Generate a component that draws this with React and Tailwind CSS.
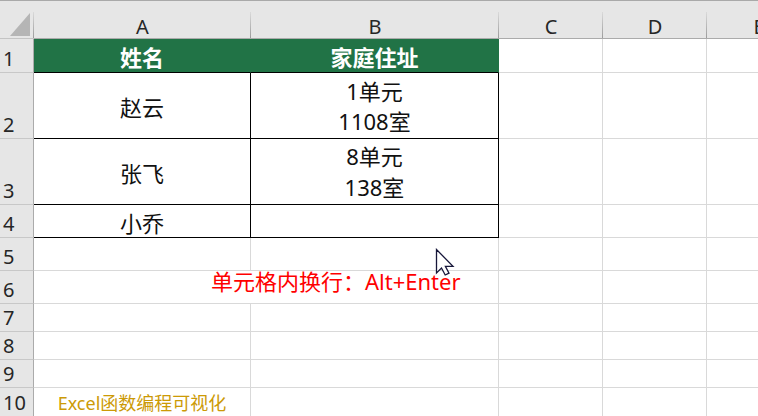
import React from "react";

const F = "font-['Noto_Sans','Noto_Sans_CJK_SC',sans-serif]";

function ColHead({ label }) {
  return (
    <div className="relative flex items-end justify-center pb-[1px] bg-[#e6e6e6] border-t border-b border-t-[#a9a9a9] border-b-[#ababab] text-[20px] leading-[20px] text-[#262626] overflow-visible">
      <span>{label}</span>
      <span className="absolute right-0 top-[11px] bottom-0 w-px bg-linear-to-b from-[#dadada] to-[#9c9c9c]" />
    </div>
  );
}

function RowHead({ n }) {
  return (
    <div className="flex items-end pl-[3px] pb-[3px] bg-[#e6e6e6] border-r border-b border-r-[#ababab] border-b-[#c8c8c8] text-[20px] leading-[20px] text-[#262626]">
      {n}
    </div>
  );
}

function Grid() {
  return <div className="border-r border-b border-[#d9d9d9] bg-white" />;
}

function Tbl({ children, className = "" }) {
  return (
    <div className={"flex flex-col items-center justify-center border-r border-b border-black bg-white text-[22px] text-[#111] " + className}>
      {children}
    </div>
  );
}

export default function App() {
  return (
    <div className={"relative w-[758px] h-[416px] overflow-hidden bg-white " + F}>
      <div className="grid grid-cols-[34px_217px_248px_104px_104px_104px] grid-rows-[39px_34px_66px_66px_33px_33px_33px_28px_28px_28px_29px]">
        {/* header row */}
        <div className="relative bg-[#e6e6e6] border-t border-b border-t-[#a9a9a9] border-b-[#c4c4c4]">
          <svg className="absolute left-[10px] top-[12px]" width="21" height="23" viewBox="0 0 21 23">
            <polygon points="20,0 20,23 0,23" fill="#b5b5b5" />
          </svg>
          <span className="absolute right-0 top-[11px] bottom-0 w-px bg-linear-to-b from-[#dadada] to-[#9c9c9c]" />
        </div>
        <ColHead label="A" />
        <ColHead label="B" />
        <ColHead label="C" />
        <ColHead label="D" />
        <ColHead label="E" />

        {/* row 1 */}
        <RowHead n={1} />
        <div className="flex items-center justify-center pt-[3px] bg-[#217346] border-r border-b border-r-[#217346] border-b-black text-white font-bold text-[22px] leading-[22px]">
          姓名
        </div>
        <div className="flex items-center justify-center pt-[3px] bg-[#217346] border-r border-b border-r-[#217346] border-b-black text-white font-bold text-[22px] leading-[22px]">
          家庭住址
        </div>
        <Grid />
        <Grid />
        <Grid />

        {/* row 2 */}
        <RowHead n={2} />
        <Tbl className="leading-[22px] pt-[2px]">赵云</Tbl>
        <Tbl className="leading-[30px]">
          <span>1单元</span>
          <span>1108室</span>
        </Tbl>
        <Grid />
        <Grid />
        <Grid />

        {/* row 3 */}
        <RowHead n={3} />
        <Tbl className="leading-[22px] pt-[2px]">张飞</Tbl>
        <Tbl className="leading-[31px] pt-[1px]">
          <span>8单元</span>
          <span>138室</span>
        </Tbl>
        <Grid />
        <Grid />
        <Grid />

        {/* row 4 */}
        <RowHead n={4} />
        <Tbl className="leading-[22px] pt-[3px]">小乔</Tbl>
        <Tbl />
        <Grid />
        <Grid />
        <Grid />

        {/* row 5 */}
        <RowHead n={5} />
        <Grid />
        <Grid />
        <Grid />
        <Grid />
        <Grid />

        {/* row 6 */}
        <RowHead n={6} />
        <div className="col-span-2 flex items-start pl-[177px] border-r border-b border-[#d9d9d9] bg-white text-[22px] leading-[20px] text-[#ff0000] whitespace-nowrap">
          单元格内换行：Alt+Enter
        </div>
        <Grid />
        <Grid />
        <Grid />

        {/* rows 7-9 */}
        <RowHead n={7} />
        <Grid />
        <Grid />
        <Grid />
        <Grid />
        <Grid />
        <RowHead n={8} />
        <Grid />
        <Grid />
        <Grid />
        <Grid />
        <Grid />
        <RowHead n={9} />
        <Grid />
        <Grid />
        <Grid />
        <Grid />
        <Grid />

        {/* row 10 */}
        <RowHead n={10} />
        <div className="flex items-center justify-center pt-[1px] border-r border-b border-[#d9d9d9] bg-white text-[18px] leading-[18px] text-[#cc9a06] whitespace-nowrap">
          Excel函数编程可视化
        </div>
        <Grid />
        <Grid />
        <Grid />
        <Grid />
      </div>

      {/* mouse cursor */}
      <svg className="absolute left-[435px] top-[248px]" width="20" height="28" viewBox="0 0 20 28">
        <path
          d="M1.5 1.5 L1.5 25 L6.5 20 L10.2 27 L14 25.2 L10.4 18.3 L18 18.3 Z"
          fill="#ffffff"
          stroke="#17173a"
          strokeWidth="1.3"
          strokeLinejoin="miter"
        />
      </svg>
    </div>
  );
}
